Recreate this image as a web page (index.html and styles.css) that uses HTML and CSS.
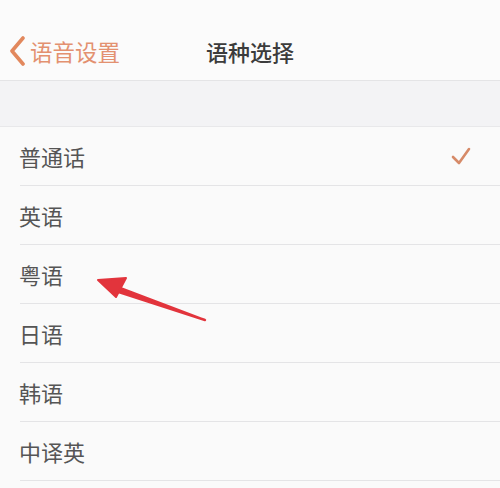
FILE: index.html
```html
<!DOCTYPE html>
<html lang="zh">
<head>
<meta charset="utf-8">
<title>语种选择</title>
<link rel="stylesheet" href="styles.css">
</head>
<body>
<div class="screen">
  <header class="nav">
    <div class="back">
      <svg class="chev" width="18" height="30" viewBox="0 0 18 30"><path d="M15 2 L4 15 L15 28" fill="none" stroke="#e2885d" stroke-width="3.6" stroke-linecap="round" stroke-linejoin="round"/></svg>
      <span class="back-text">语音设置</span>
    </div>
    <div class="title">语种选择</div>
  </header>
  <div class="band"></div>
  <ul class="list">
    <li class="row"><span>普通话</span>
      <svg class="check" width="20" height="20" viewBox="0 0 20 20"><path d="M2 11 L8 17 L18 3" fill="none" stroke="#d68a68" stroke-width="2.6" stroke-linecap="round" stroke-linejoin="round"/></svg>
    </li>
    <li class="row"><span>英语</span></li>
    <li class="row"><span>粤语</span></li>
    <li class="row"><span>日语</span></li>
    <li class="row"><span>韩语</span></li>
    <li class="row"><span>中译英</span></li>
  </ul>
  <svg class="arrow" width="500" height="488" viewBox="0 0 500 488">
    <path d="M205 320 L114 285.5 L112.5 290 Z" fill="#e2343c" stroke="#e2343c" stroke-width="2.4" stroke-linejoin="round"/>
    <path d="M98 280 L126 278 L116 297 Z" fill="#e2343c" stroke="#e2343c" stroke-width="2" stroke-linejoin="round"/>
  </svg>
</div>
</body>
</html>
```
FILE: styles.css
```css
* { box-sizing: border-box; }
html, body { margin: 0; padding: 0; }
body {
  width: 500px;
  height: 488px;
  overflow: hidden;
  background: #fafafa;
  font-family: "Noto Sans CJK SC", "Noto Sans", sans-serif;
}
.screen { position: relative; width: 500px; height: 488px; }
.nav {
  height: 81px;
  border-bottom: 1px solid #e4e4e6;
  background: #fbfbfb;
  display: flex;
  align-items: center;
  position: relative;
  padding-top: 22px;
}
.back {
  display: flex;
  align-items: center;
  padding-left: 8px;
  gap: 4px;
}
.chev { display: block; }
.back-text {
  color: #e39170;
  font-size: 22.5px;
  line-height: 28px;
}
.title {
  position: absolute;
  left: 0;
  right: 0;
  top: 22px;
  bottom: 0;
  display: flex;
  align-items: center;
  justify-content: center;
  font-size: 22px;
  font-weight: 500;
  color: #3c3c3c;
  pointer-events: none;
}
.band {
  height: 46px;
  background: #f3f3f5;
  border-bottom: 1px solid #e8e8ea;
}
.list { list-style: none; margin: 0; padding: 0 0 0 20px; }
.row {
  height: 59px;
  border-bottom: 1px solid #e4e4e6;
  display: flex;
  align-items: center;
  justify-content: space-between;
  padding-right: 29px;
  font-size: 22px;
  color: #555555;
}
.row span { display: block; margin-left: -1px; }
.check { display: block; }
.arrow { position: absolute; left: 0; top: 0; pointer-events: none; }
```
